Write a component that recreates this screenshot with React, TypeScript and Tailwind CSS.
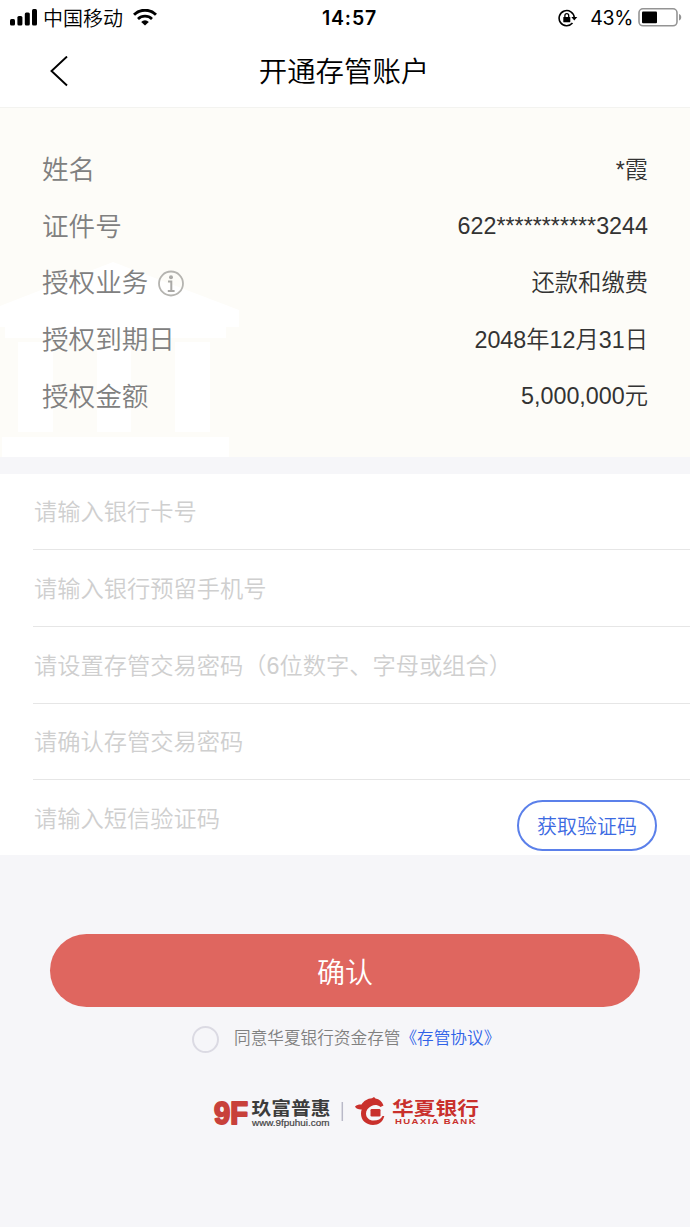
import { useState } from "react";

const details = [
  { label: "姓名", value: "*霞" },
  { label: "证件号", value: "622***********3244" },
  { label: "授权业务", value: "还款和缴费", info: true },
  { label: "授权到期日", value: "2048年12月31日" },
  { label: "授权金额", value: "5,000,000元" },
];

const fields = [
  { name: "card", placeholder: "请输入银行卡号", height: "h-[76px]" },
  { name: "phone", placeholder: "请输入银行预留手机号", height: "h-[77px]" },
  { name: "password", placeholder: "请设置存管交易密码（6位数字、字母或组合）", height: "h-[77px]" },
  { name: "confirm", placeholder: "请确认存管交易密码", height: "h-[76px]" },
];

const inputClass =
  "min-w-0 flex-1 bg-transparent pt-[2px] pl-[1px] text-[23.25px] leading-none font-[350] text-[#333] outline-none placeholder:text-[#cfcfcf]";

const StatusBar = () => (
  <div className="flex h-9 items-center pl-[10px] pr-[8px] text-black">
    <div className="flex flex-1 items-center">
      <svg width="27" height="18" viewBox="0 0 27 18">
        <rect x="0" y="10" width="5" height="6.5" rx="1.5" />
        <rect x="7.4" y="7" width="5" height="9.5" rx="1.5" />
        <rect x="14.8" y="3.5" width="5" height="13" rx="1.5" />
        <rect x="22" y="0" width="5" height="16.5" rx="1.5" />
      </svg>
      <span className="ml-[6px] pt-[2px] text-[20px] leading-none font-[350]">中国移动</span>
      <svg width="24" height="18" viewBox="0 0 24 18" className="ml-[10px]" fill="none" stroke="#000">
        <path d="M1 5.8a15.6 15.6 0 0 1 22 0" strokeWidth="3" />
        <path d="M5 10a10 10 0 0 1 14 0" strokeWidth="2.7" />
        <path d="M12 16.5l-3.8-3.6a5.4 5.4 0 0 1 7.6 0z" fill="#000" stroke="none" />
      </svg>
    </div>
    <span className="pt-px pl-[7px] font-[Inter] text-[19.5px] leading-none font-semibold tracking-[0.8px]">14:57</span>
    <div className="flex flex-1 items-center justify-end">
      <svg width="20" height="18" viewBox="0 0 20 18" fill="none" stroke="#000" strokeWidth="1.6">
        <path d="M14.5 14.1a7.6 7.6 0 1 1 1.8-5.5" />
        <path d="M13.3 8h6l-3 3.5z" fill="#000" stroke="none" />
        <rect x="5.3" y="8" width="7" height="5.3" rx="0.6" fill="#000" stroke="none" />
        <path d="M6.9 8.3V6.5a1.9 1.9 0 0 1 3.8 0v1.8" strokeWidth="1.3" />
      </svg>
      <span className="ml-[12px] pt-px font-[Inter] text-[19.5px] leading-none tracking-[-0.3px]">43%</span>
      <svg width="44" height="20" viewBox="0 0 44 20" className="ml-[5px]">
        <rect x="1" y="0.8" width="38" height="17" rx="4" fill="none" stroke="#949494" strokeWidth="1.6" />
        <rect x="4" y="3.5" width="15" height="11.8" rx="1" fill="#000" />
        <path d="M41 6c3 1 3 5.5 0 6.5z" fill="#949494" />
      </svg>
    </div>
  </div>
);

const InfoIcon = () => (
  <svg width="27" height="27" viewBox="0 0 27 27" className="ml-[10px]" fill="none" stroke="#b5b4b0">
    <circle cx="13" cy="13.5" r="12" strokeWidth="1.8" />
    <circle cx="13" cy="7.2" r="2" fill="#aaa9a6" stroke="none" />
    <path d="M10 11.5h3.3v9M9.8 21h6.8" strokeWidth="2" stroke="#aaa9a6" />
  </svg>
);

const BankWatermark = () => (
  <svg className="absolute bottom-0 left-0" width="240" height="196" viewBox="0 0 240 196" fill="#fff">
    <path d="M0 45L113 1l126 48v17h-13v11H5V66H0z" />
    <path d="M18 81h35v90H18zM97 81h34v90H97zM175 81h35v90h-35zM2 176h227v20H2z" />
  </svg>
);

const PartnerLogos = () => (
  <svg
    width="270"
    height="40"
    viewBox="0 0 270 40"
    fontFamily="'Liberation Sans', 'Noto Sans CJK SC', sans-serif"
  >
    <text x="4" y="31" fontSize="32" fontWeight="700" fill="#c8413b" stroke="#c8413b" strokeWidth="2" strokeLinejoin="round" textLength="34" lengthAdjust="spacingAndGlyphs">9F</text>
    <text x="41.5" y="22" fontSize="18.5" fontWeight="700" fill="#3c3c3c" textLength="79" lengthAdjust="spacingAndGlyphs">玖富普惠</text>
    <text x="42" y="33" fontSize="9" fill="#444" stroke="#444" strokeWidth="0.2" textLength="77.5" lengthAdjust="spacingAndGlyphs">www.9fpuhui.com</text>
    <path d="M132.3 9v19" stroke="#b9b9c8" strokeWidth="1.5" />
    <g fill="#c9302c">
      <path d="M145 13.500c2-1.700 4-2.200 6.500-2 2-3.500 6-6 10.500-6.300l2-1.200 1.500 1.500c4 .5 6.500 3 8 7l-3 1.500c-3-2.200-6-2.500-9-1-3.500 1.700-5.500 4.200-5.500 7.500 0 4.300 3.300 7 7.500 7 4.500 0 7.500-1.500 9-4.500h1.800c-1.300 6-5.800 9-11.300 9-7 0-12-4.700-12-11.200 0-1.600.2-3 .7-4.300-3 .2-5.500-.5-6.700-3z" />
      <rect x="160.500" y="16" width="10" height="7.500" rx="1.2" />
    </g>
    <text x="182" y="22" fontSize="18.5" fontWeight="700" fill="#c9302c" textLength="87" lengthAdjust="spacingAndGlyphs">华夏银行</text>
    <text x="185" y="30.5" fontSize="7" fontWeight="700" fill="#c9302c" textLength="82" lengthAdjust="spacingAndGlyphs" letterSpacing="1">HUAXIA BANK</text>
  </svg>
);

const App = () => {
  const [agreed, setAgreed] = useState(false);

  return (
    <div className="min-h-[1227px] w-[690px] bg-[#f6f6f9] font-['Liberation_Sans','Noto_Sans_CJK_SC',sans-serif]">
      <header className="h-[107px] bg-white">
        <StatusBar />
        <div className="flex h-[70px] items-center">
          <button className="w-[120px] pl-[50px]" aria-label="返回">
            <svg width="18" height="31" viewBox="0 0 18 31" fill="none" stroke="#000" strokeWidth="1.9">
              <path d="M17 0.5L1.5 15 17 29.5" />
            </svg>
          </button>
          <h1 className="flex-1 pt-[3px] text-center text-[28.4px] leading-none font-[350] text-black">开通存管账户</h1>
          <div className="w-[122px]" />
        </div>
      </header>

      {/* Account details */}
      <section className="relative h-[350px] border-t border-[#f3f3f0] bg-[#fdfcf8] pt-[34px]">
        <BankWatermark />
        <dl className="relative px-[42px]">
          {details.map((item) => (
            <div key={item.label} className="flex h-[56.7px] items-center justify-between">
              <dt className="flex items-center text-[26.6px] leading-none font-[350] text-[#808080]">
                {item.label}
                {item.info && <InfoIcon />}
              </dt>
              <dd className="text-[23.3px] leading-none font-[350] text-[#333]">{item.value}</dd>
            </div>
          ))}
        </dl>
      </section>

      {/* Form */}
      <section className="mt-[17px] h-[381px] bg-white pl-[33px]">
        {fields.map((field) => (
          <div key={field.name} className={`flex items-center border-b border-[#e6e6e6] ${field.height}`}>
            <input className={inputClass} name={field.name} placeholder={field.placeholder} />
          </div>
        ))}
        <div className="flex h-[75px] pr-[33px]">
          <div className="flex h-[77px] flex-1 items-center">
            <input className={inputClass} name="code" placeholder="请输入短信验证码" />
          </div>
          <button className="mt-5 h-[51px] w-[140px] rounded-full border-2 border-[#5b80ea] pt-[2px] text-[20px] leading-none font-[350] text-[#3c6ae2]">
            获取验证码
          </button>
        </div>
      </section>

      {/* Submit and agreement */}
      <div className="flex flex-col items-center pt-[79px]">
        <button className="h-[73px] w-[590px] rounded-full bg-[#df665f] pt-[6px] text-[28px] leading-none font-[350] text-white">
          确认
        </button>
        <div className="mt-[18px] flex h-7 w-full items-center pl-[192px] text-[16.65px] leading-none font-[350]">
          <button
            className={`size-[27px] rounded-full border-2 border-[#dbdae3] ${agreed ? "bg-[#df665f]" : ""}`}
            aria-label="同意协议"
            onClick={() => setAgreed(!agreed)}
          />
          <p className="ml-[15px] text-[#808080]">
            同意华夏银行资金存管<a href="#" className="text-[#2f62e8]">《存管协议》</a>
          </p>
        </div>
        <div className="mt-10 w-full pl-[210px]">
          <PartnerLogos />
        </div>
      </div>
    </div>
  );
};

export default App;
